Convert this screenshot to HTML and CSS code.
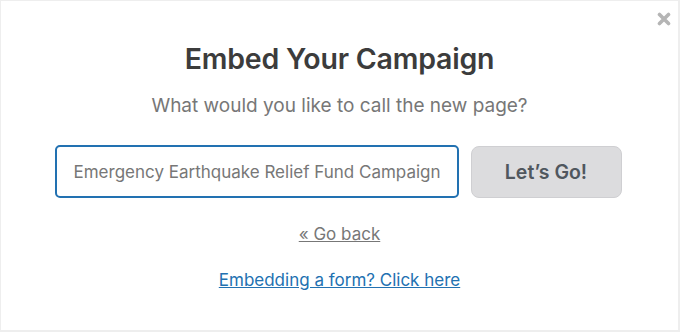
FILE: index.html
```html
<!DOCTYPE html>
<html lang="en">
<head>
    <meta charset="UTF-8">
    <title>Embed Your Campaign</title>
    <link rel="stylesheet" href="styles.css">
</head>
<body>
    <div class="modal">
        <button class="close" aria-label="Close">
            <svg width="14" height="14" viewBox="0 0 14 14">
                <path d="M2.5 2.5 L11.5 11.5 M11.5 2.5 L2.5 11.5" stroke="#b5b5b5" stroke-width="3.6" stroke-linecap="round"/>
            </svg>
        </button>

        <h1>Embed Your Campaign</h1>
        <p class="subtitle">What would you like to call the new page?</p>

        <div class="row">
            <input type="text" class="page-name" value="Emergency Earthquake Relief Fund Campaign">
            <button class="btn-go">Let’s Go!</button>
        </div>

        <a href="#" class="back">« Go back</a>
        <a href="#" class="form-link">Embedding a form? Click here</a>
    </div>
</body>
</html>
```

FILE: styles.css
```css
* {
    margin: 0;
    padding: 0;
    box-sizing: border-box;
}

body {
    font-family: Inter, 'Noto Sans', sans-serif;
    background: #fff;
}

.modal {
    position: relative;
    width: 680px;
    height: 332px;
    border: 1px solid #eeeeee;
    border-right-width: 2px;
    border-bottom-width: 2px;
    display: flex;
    flex-direction: column;
    align-items: center;
    padding-top: 40px;
}

.close {
    position: absolute;
    top: 11px;
    right: 7px;
    border: none;
    background: none;
    cursor: pointer;
    display: flex;
}

h1 {
    font-size: 28.5px;
    font-weight: 600;
    color: #3c3c3c;
    letter-spacing: -0.2px;
    line-height: 36px;
}

.subtitle {
    margin-top: 17px;
    font-size: 19px;
    color: #777;
    line-height: 24px;
}

.row {
    display: flex;
    align-items: center;
    gap: 12px;
    margin-top: 27px;
    margin-left: -3px;
}

.page-name {
    width: 404px;
    height: 53px;
    border: 2px solid #2271b1;
    border-radius: 5px;
    padding: 0 15px 0 17px;
    font-family: inherit;
    font-size: 17px;
    color: #777;
    outline: none;
}

.btn-go {
    width: 151px;
    height: 52px;
    background: #dcdcde;
    border: 1px solid #cfcfd2;
    border-radius: 8px;
    font-family: inherit;
    font-size: 19.5px;
    font-weight: 600;
    color: #50575e;
    cursor: pointer;
}

.back {
    margin-top: 25px;
    font-size: 17px;
    color: #777;
    line-height: 22px;
}

.form-link {
    margin-top: 24px;
    font-size: 17px;
    color: #2271b1;
    line-height: 22px;
}
```
